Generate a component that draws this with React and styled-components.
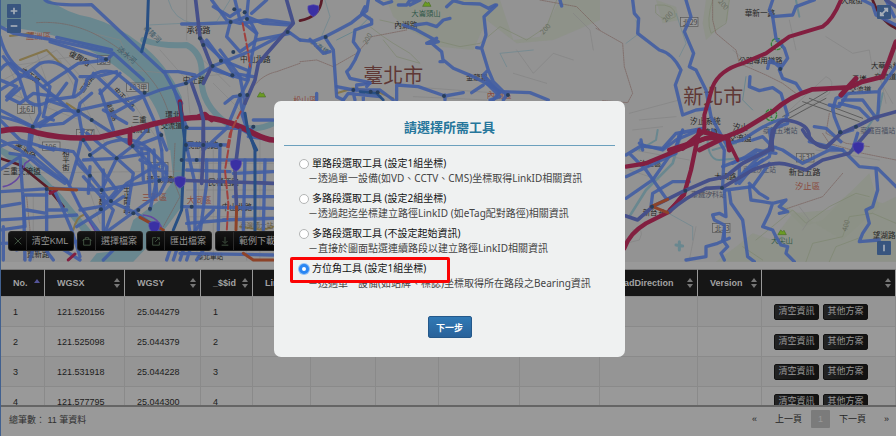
import React, { useState } from "react";
import styled, { createGlobalStyle, css } from "styled-components";

const GlobalStyle = createGlobalStyle`
  *, *::before, *::after { box-sizing: border-box; }
  body {
    margin: 0;
    background: #999;
    font-family: "Liberation Sans", "Noto Sans CJK TC", sans-serif;
    font-size: 9px;
    color: #1c1c1c;
  }
  button, input { font: inherit; }
`;

const Page = styled.div`
  display: flex;
  flex-direction: column;
  height: 100vh;
  border-left: 1px solid #41608f;
  overflow: hidden;
`;

/* ---------- map ---------- */

const MapArea = styled.section`
  position: relative;
  flex: 262 1 0;
  min-height: 0;
  overflow: hidden;
  background: #949494;
`;

const MapCanvas = styled.svg`
  display: block;
  width: 100%;
  height: 100%;
  font-family: "Noto Sans CJK TC", sans-serif;
`;

const ZoomControls = styled.div`
  position: absolute;
  top: 4px;
  left: 6px;
  display: grid;
  gap: 1px;
`;

const MapButton = styled.button`
  display: grid;
  place-items: center;
  width: 14px;
  height: 14px;
  padding: 0;
  border: 0;
  border-radius: 1px;
  background: #38557f;
  color: #a5adb8;
`;

const CornerButton = styled(MapButton)`
  position: absolute;
  right: 5px;
  ${(p) => (p.$bottom ? "bottom: 7px;" : "top: 5px;")}
`;

const Toolbar = styled.div`
  position: absolute;
  left: 7px;
  bottom: 11px;
  display: flex;
  gap: 3px;
`;

const ToolButton = styled.button`
  display: flex;
  align-items: stretch;
  width: 66px;
  height: 20px;
  padding: 0;
  border: 1px solid #222;
  border-radius: 3px;
  background: linear-gradient(#161616, #030303);
  color: #969696;
  font-size: 9px;
  line-height: 18px;
  white-space: nowrap;
`;

const ToolIcon = styled.span`
  display: grid;
  place-items: center;
  width: 18px;
  border-right: 1px solid #2b2b2b;
  color: #4a5f4a;
`;

const ToolText = styled.span`
  flex: 1;
  text-align: center;
`;

/* ---------- table ---------- */

const TableArea = styled.section`
  flex: 136 1 0;
  min-height: 0;
  padding-top: 7px;
  overflow: hidden;
`;

const Table = styled.table`
  width: 100%;
  table-layout: fixed;
  border-collapse: separate;
  border-spacing: 0;
`;

const Col = styled.col`
  width: ${(p) => (p.$w ? `${p.$w}px` : "auto")};
`;

const HeadCell = styled.th`
  height: 28px;
  padding: 0 4px 0 12px;
  background: #161616;
  border-top: 1px solid #777;
  border-right: 1px solid #999;
  border-bottom: 1px solid #8a8a8a;
  color: #a3a3a3;
  text-align: left;
  white-space: nowrap;
`;

const HeadContent = styled.div`
  display: flex;
  align-items: center;
  justify-content: space-between;
`;

const Row = styled.tr`
  background: ${(p) => (p.$odd ? "#959595" : "#999")};
`;

const Cell = styled.td`
  height: 30px;
  padding: 0 0 0 12px;
  border-right: 1px solid #8a8a8a;
  border-bottom: 1px solid #8a8a8a;
  white-space: nowrap;
`;

const RowActions = styled.div`
  display: flex;
  gap: 4px;
`;

const RowButton = styled.button`
  width: 45px;
  height: 16px;
  padding: 0;
  border: 1px solid #111;
  border-radius: 2px;
  background: linear-gradient(100deg, #242424, #121212 70%);
  color: #989898;
  font-size: 9px;
  line-height: 13px;
`;

const Footer = styled.footer`
  flex: 0 0 31px;
  display: flex;
  align-items: center;
  justify-content: space-between;
  padding: 0 7px 5px 8px;
  border-top: 2px solid #656565;
  background: #999;
  color: #303030;
`;

const Pager = styled.nav`
  display: flex;
  align-items: center;
  gap: 9px;
`;

const PageLink = styled.a`
  color: #252525;
  text-decoration: none;
  line-height: 18px;
  ${(p) => p.$edge && css`padding: 0 9px 0 8px;`}
  ${(p) => p.$last && css`padding: 0 0 0 9px;`}
  ${(p) =>
    p.$active &&
    css`
      width: 19px;
      text-align: center;
      background: #7b7b7b;
      color: #999;
      border-radius: 1px;
    `}
`;

/* ---------- dialog ---------- */

const Overlay = styled.div`
  position: fixed;
  inset: 0;
  display: flex;
  justify-content: center;
  align-items: flex-start;
  padding: 101px 0 0 3px;
`;

const Dialog = styled.form`
  width: 351px;
  padding: 16px 10px 19px;
  border-radius: 7px;
  background: #eff1f1;
  font-family: "Noto Sans", "Noto Sans CJK TC", sans-serif;
`;

const DialogTitle = styled.h2`
  margin: 0 0 10px;
  padding-bottom: 9px;
  border-bottom: 1px solid #6ba0bd;
  color: #26769b;
  font-family: "Noto Sans CJK TC", sans-serif;
  font-size: 13px;
  line-height: 19px;
  text-align: center;
`;

const Options = styled.div`
  display: grid;
  gap: 5px;
  padding-left: 15px;
`;

const Option = styled.div`
  font-size: 10px;
  line-height: 15px;
`;

const OptionLabel = styled.label`
  position: relative;
  z-index: 1;
  display: flex;
  align-items: center;
  width: max-content;
  gap: 3px;
  color: #111;
  font-size: 10px;
  ${(p) =>
    p.$highlight &&
    css`
      &::before {
        content: "";
        position: absolute;
        z-index: -1;
        inset: -4px -24px -7px -9px;
        border: 3px solid #fb0303;
        border-radius: 2px;
        background: #eff1f1;
      }
    `}
`;

const Radio = styled.input`
  appearance: none;
  width: 10px;
  height: 10px;
  margin: 0;
  border: 1px solid #b3b5b5;
  border-radius: 50%;
  background: #fff;
  &:checked {
    border: 3px solid #2b87f3;
    box-shadow: 0 0 0 1px #8fc0f5;
  }
`;

const OptionHint = styled.p`
  margin: 0;
  padding-left: 9px;
  color: #444;
  white-space: nowrap;
`;

const DialogActions = styled.div`
  display: flex;
  justify-content: center;
  margin-top: 25px;
`;

const NextButton = styled.button`
  width: 44px;
  height: 22px;
  padding: 0;
  border: 1px solid #24588a;
  border-radius: 2px;
  background: linear-gradient(#3079b5, #29629a);
  color: #fff;
  font-size: 9px;
  font-weight: 700;
`;

/* ---------- map data: each tile is drawn on a 3x grid ---------- */

const tiles = [
  {
    x: 0, y: 0,
    water: [
      "M60 0 L150 0 Q200 40 270 52 Q350 75 420 130 Q500 190 545 290 L560 450 L505 450 Q485 330 430 270 Q350 190 240 135 Q140 90 0 80 L0 20 Z",
      "M0 0 L60 0 L100 40 L0 60 Z",
    ],
    streams: [
      ["M430 120 Q490 140 560 135 Q610 160 605 230 Q600 310 680 370 Q760 400 820 370", 18],
      ["M445 75 L650 65 L690 0", 2], ["M505 0 Q520 60 580 70", 2],
    ],
    minor: [
      "M280 100 L360 120 L400 210 L500 220 M560 0 L560 120 M640 250 L740 350 M480 150 L560 240 L570 340 M20 200 L220 170 M10 240 L170 150 L260 250 M30 280 L240 360 M110 160 L160 300 L90 380 M240 160 L390 320 M590 230 L700 220 M610 180 L690 260 M10 160 L120 420 M180 180 L320 440 M380 280 L480 430",
    ],
    trails: ["M110 68 Q200 62 280 100 Q400 160 470 260 Q520 340 525 450", "M730 320 Q760 230 830 215 L900 190"],
    red: [["M0 393 Q60 380 110 398 Q200 420 300 412 Q380 395 460 372 Q550 350 620 352 Q700 365 760 400 Q800 420 820 420", 17], ["M390 395 L390 430 M540 305 L545 360 M595 350 L615 342 L635 360", 14]],
    yellow: ["M30 108 L100 100 M60 180 L140 150 L190 200 M200 310 L400 440"],
    navy: [["M445 0 L442 90 L425 155", 9], ["M540 310 L558 450 M735 340 L745 400 L770 450", 9]],
    purple: ["M587 0 L600 110 L635 200 L610 250 M860 0 L880 70 L775 190 L765 240 L735 310", "M575 250 L600 320 L610 360 L610 450"],
    rail: ["M728 70 L745 160 L750 200 M722 335 L690 400 L680 450"],
    roads: [
      "M135 0 Q150 18 275 14 L425 155 L495 220 L520 265 L545 310",
      "M0 80 L40 100 L150 118 L340 160 L320 180 L235 190 L130 260",
      "M150 125 L320 178 M170 112 L335 150",
      "M0 110 Q20 190 80 220 L230 345 L240 330 L440 285 L480 270 L558 250 L635 200 L760 150 L865 95",
      "M0 210 Q30 170 50 210 L80 300 Q110 330 150 300 L225 290 Q260 270 260 240 Q300 200 350 220 L430 285",
      "M0 240 L50 260 L20 290 L60 310 L100 280 L170 290 L200 250 M0 270 L80 220 L120 190 Q180 170 230 240 L220 290",
      "M10 170 L50 220 L110 240 L120 340 L100 380 L90 450 M0 330 L100 380 L190 330 L240 335",
      "M100 210 L150 260 L130 350 L160 360 M0 350 Q50 360 95 380 M0 360 L60 420 L160 450",
      "M240 230 L290 230 L350 215 M280 220 L400 330 M235 335 L250 420 L270 450",
      "M235 335 L400 440 L450 450 M275 280 L240 310 L235 335 M300 270 L340 390",
      "M330 345 L430 290 L470 380 L485 450 M310 330 L380 370",
      "M340 160 L430 240 M100 380 L190 370 L240 335",
      "M545 72 L590 72 L690 68 L740 50 L745 0 M635 0 L680 60 L720 70 L800 60 L875 70",
      "M600 115 L680 190 L700 220 L760 230 M635 200 L700 230",
      "M690 70 L680 110 L720 155 L770 120 L870 100 M705 0 L720 60 L770 100",
      "M735 35 L770 100 L755 170 L745 240 L720 290 L730 350 M740 50 L790 70 L870 75",
      "M660 150 L720 230 L735 310 L725 340 L745 400 L760 380 M675 310 L700 290 L745 285",
      "M520 260 L560 385 L720 385 L745 400 M620 120 L665 180 L740 210",
      "M480 400 L500 450 M760 360 L820 360 M560 430 L680 435",
      "M640 210 L740 240 L750 200 M490 215 L535 215 L585 225",
      "M720 30 L690 50 L640 20 M755 40 L800 0 M865 95 L900 120",
      "M140 300 L200 320 M170 340 L120 380 M20 300 L60 265 M720 290 L680 385 L610 450",
      "M400 440 L480 410 M300 280 L360 220",
    ],
    dots: [[235, 333], [98, 380], [318, 178], [558, 250], [600, 115], [638, 198], [663, 182], [700, 156], [692, 66], [734, 37], [741, 57], [720, 285], [742, 285], [760, 380], [560, 382], [484, 405], [250, 420], [398, 438], [610, 135], [697, 226], [662, 435], [610, 435], [703, 28], [863, 96], [558, 435], [275, 360], [434, 278]],
    labels: [
      ["蘆洲區", 78, 116, 25, "#8a4a3e"], ["復興路", 205, 165, 23, "#222", 30], ["淡水河", 350, 150, 22, "#3d5a68", 40], ["承德路", 560, 100, 24], ["中山北路", 720, 187, 23], ["中正路", 548, 248, 23], ["三重", 396, 366, 22], ["交流道", 385, 396, 22], ["環北", 496, 350, 22], ["交流道", 482, 384, 22], ["民族北路", 560, 445, 24], ["中正路", 60, 215, 22, "#222", 35], ["三和路", 250, 280, 20, "#222", -55], ["中正北路", 340, 270, 20, "#222", 48], ["重陽路", 315, 310, 20, "#222", 65], ["基隆河", 430, 85, 21, "#3d5a68", 45],
    ],
    shields: [["103甲", 380, 249], ["北61", 52, 314], ["北67", 230, 388], ["北6", 292, 167], ["106", 128, 426]],
    peaks: [[784, 284]],
  },
  {
    x: 300, y: 0,
    green: ["M260 0 L600 0 L640 120 L720 110 L780 0 L900 0 L900 60 L760 120 L650 130 L560 60 L520 150 L420 140 L330 90 L280 50 Z"],
    streams: [["M210 50 L170 90 L110 120", 3], ["M75 0 L90 50 L60 120", 2], ["M620 200 L600 160 L700 150", 2]],
    minor: ["M330 260 L600 280 M340 290 L560 300 M650 150 L700 220 L760 160 L820 180 M820 40 L870 90 L880 150 M640 220 L740 250"],
    contours: ["M210 80 L250 110 L280 130 L330 160 L360 190 L290 170 L250 120 M240 60 L330 80 L400 120 L480 140 L540 130 L600 80 L680 120 L740 80 L770 0"],
    trails: ["M0 185 L50 180 L100 200 L170 160 L215 110 L320 90", "M720 0 L830 20 L900 90"],
    darkred: ["M0 62 Q60 50 65 0"],
    yellow: ["M110 280 L160 265 L230 275 L280 295"],
    navy: [["M180 275 L230 280 L250 300", 8]],
    roads: [
      "M0 120 L40 124 L75 110 L110 92 L155 68 L200 32 L205 0",
      "M75 112 L100 150 L110 290 L130 300 M30 118 L70 160 L90 155",
      "M195 20 L185 40 L215 60 L215 72 L165 90 L160 125 L178 150 L165 180 L150 205 L140 215 L150 235 L210 248 L200 260",
      "M230 0 L250 12 L275 5 M295 15 L320 15 L330 0 L360 0 L330 15 M440 20 L460 2 L490 10 L540 12 L565 25 L585 15",
      "M590 15 L552 50 L558 105 L545 145 L530 143 M545 145 L565 210 L550 225 L600 275 M565 210 L580 245 L620 285",
      "M345 75 L380 70 L410 80 L430 60 L450 55",
      "M310 75 L350 90 L415 125 L395 130 L380 130 L410 115 M395 130 L425 155 L430 185 L420 185 M430 180 L460 205 L520 230 L550 245 L600 275",
      "M290 300 L290 255 L355 260 L435 288 L490 278 M435 285 L435 300 M515 278 L550 255",
      "M110 260 L160 270 L240 270 L280 300 M130 300 L145 280 L240 290 M50 280 L50 300 M190 270 L190 300 M160 280 L165 300",
      "M580 300 L600 275 L690 278 L745 300 M620 285 L610 300 M780 0 L785 18 M210 250 L170 255 L170 270",
      "M550 230 L590 270 M560 250 L600 290 L570 300",
    ],
    dots: [[77, 111], [160, 270], [212, 275], [233, 277], [432, 288], [624, 285]],
    labels: [["大崙頭山", 334, 47, 22, "#31584a"], ["內湖路", 283, 85, 23], ["臺北市", 190, 250, 60, "#5f3835"], ["金龍路", 498, 240, 22], ["內湖區", 560, 294, 25, "#8a4a3e"], ["松山區", -20, 310, 24, "#8a4a3e"], ["200", 200, 135, 21, "#666b60", -60], ["200", 730, 105, 21, "#666b60", -48], ["大直橋", 30, 130, 20, "#3d5a68", 35]],
    peaks: [[380, 12]], pins: [[40, 30]],
  },
  {
    x: 596, y: 0,
    green: ["M180 0 L240 20 L250 60 L200 70 Z M330 0 L400 0 L395 60 L330 120 L320 70 Z"],
    streams: [["M240 40 L270 130 L250 170", 2], ["M90 130 L130 100 L120 60", 2], ["M130 450 L180 420 L185 390 M600 0 L610 50", 6], ["M450 230 L440 300 L470 330", 3], ["M810 390 L850 330 L860 280 M350 450 L420 430", 6]],
    contours: ["M180 15 Q240 10 238 50 Q210 70 180 40 Z M350 0 Q330 60 345 100 L390 70 L400 0"],
    minor: ["M100 340 L250 300 M410 150 L470 200 M580 60 L600 150 M690 110 L770 160 L820 150 L830 210 M130 360 L240 350 M110 390 L200 380 M840 220 L890 310 M850 210 L870 310 M560 350 L690 230 Q720 240 700 280 L560 370"],
    rail2: ["M560 350 L650 300 L700 270 M560 365 L690 295 M640 295 L800 355 M620 305 L790 365"],
    trails: ["M0 85 L80 130 L85 200 L110 280 L95 308 L20 302", "M350 0 L350 60 L360 100 L420 150 L430 190 L510 225 L560 250 L600 280", "M700 340 L690 400 L750 430 L820 440"],
    red: [["M735 0 Q710 60 680 80 L580 110 L510 160 L440 190 Q370 210 350 260 L325 345 L325 390", 12], ["M900 125 L880 180 L860 230 L800 245 L760 262 L650 268 Q580 290 530 335 L440 390 L390 410 L330 415 L220 450", 14], ["M260 445 L320 395 L390 415 M780 235 L735 285 M310 450 L390 410 M395 410 L400 450", 15]],
    darkred: ["M830 0 Q850 60 900 85"],
    purple: ["M530 450 Q520 370 570 360 Q640 370 640 410 Q660 440 690 443 L735 400 L790 375 L830 355 L900 335", "M870 0 L900 20"],
    roads: [
      "M110 0 L115 40 L128 55 L125 100 L190 150 Q230 160 255 210 L238 255 L260 345 L300 330 L340 325",
      "M270 0 L285 50 L265 95 L293 160 L280 200 L300 210 L330 270 L345 350 L400 450",
      "M530 0 L520 30 L530 50 L540 115 L565 145 L575 175 L550 210 L560 235 L600 250 L620 280",
      "M530 50 L590 45 L600 20 L640 5 L655 0 M515 205 L520 185 L550 195 M525 180 L555 205",
      "M462 230 L460 260 L490 272 L530 263 L555 280 L575 345",
      "M130 430 L150 440 L200 445 L240 400 L320 385 M240 450 L250 400 L300 390 M135 420 L140 450",
      "M570 350 L575 370 L520 390 L530 450 M470 420 L500 410 L520 430 M655 380 L690 385 L735 425",
      "M710 330 L720 295 L760 280 L850 275 M730 310 L790 325 L820 355 M710 320 L715 350 L735 400 M740 300 L800 300 L845 360 L850 270 L900 200",
      "M800 0 L830 15 L840 45 L900 75 M785 400 L770 450 M870 0 L895 50",
      "M750 290 L730 320 L700 315 M570 360 Q540 350 440 420 L400 430",
    ],
    dots: [[553, 207], [780, 380], [733, 397]],
    labels: [["華新一路", 446, 49, 23], ["大成街", 735, 8, 22], ["公路專用道路", 428, 190, 22], ["大華系統", 825, 204, 22], ["交流道", 835, 236, 22], ["五堵", 768, 243, 22], ["交流道", 760, 276, 22], ["新北市", 262, 311, 60, "#5f3835"], ["汐止系統", 282, 372, 23], ["交流道", 300, 402, 22], ["汐止", 410, 390, 23], ["交流道", 398, 424, 23], ["臺鐵五堵站", 500, 400, 21, "#484f5f"], ["臺鐵百福站", 793, 398, 21, "#484f5f"], ["200", 210, 68, 21, "#666b60", -50], ["200", 365, 5, 21, "#666b60", 50]],
    shields: [["北29", 254, 53]], badges: [["2", 543, 132], ["1", 525, 345]],
  },
  {
    x: 0, y: 130,
    water: ["M505 0 L560 0 L550 150 L545 230 L500 290 L400 395 L270 395 L290 370 L370 360 L400 270 L480 210 L520 150 Z", "M0 50 L80 90 L180 190 L280 310 L250 310 L140 170 L0 70 Z"],
    minor: ["M10 130 L820 120 M10 340 L400 320 M600 60 L590 390 M640 60 L640 390 M730 100 L740 390 M560 180 L820 180 M560 260 L820 260 M780 20 L780 390 M100 200 L100 390 M230 60 L300 280 M400 50 L480 200 M560 100 L820 100"],
    trails: ["M525 40 L520 150 L540 200 L490 290", "M80 200 L90 300 L70 390"],
    red: [["M150 190 L170 180 M205 390 L225 372", 9]],
    yellow: ["M330 5 L400 45 M510 140 L550 155 M220 300 Q230 260 250 255", "M720 290 L790 300 L820 290"],
    darkred: ["M0 85 L60 105 L140 170 L190 230"],
    orange: ["M140 175 L230 180 M420 262 L490 300 M710 230 L708 300 M730 370 L760 390 L820 390"],
    violet: ["M10 170 Q60 160 75 100 L90 90 M430 255 Q480 260 490 310", "M200 150 L240 230 L290 310"],
    navy: [["M555 0 L545 240 L520 300 M745 0 L765 60 L765 320", 9]],
    purple: ["M610 0 L610 60 L605 160 M720 0 L705 120 L710 240", "M510 150 L820 160"],
    rail: ["M695 0 L675 120 L685 220 L680 310"],
    roads: [
      "M0 50 Q60 20 100 60 L200 150 L240 230 L300 310 M0 30 L60 60 L120 110 L195 160",
      "M0 185 L160 175 L310 180 L500 145 M0 120 L60 80 L75 290 M75 195 L140 195 M90 0 L85 60",
      "M0 270 L80 265 L230 255 M0 340 L230 335 M10 290 L10 390 M0 300 L70 290",
      "M160 175 L190 240 L215 300 L240 380 M30 70 L100 80 L160 130 L210 160 L230 90 Q240 50 250 0",
      "M120 50 L220 65 L270 137 L305 180 M270 75 L320 40 Q400 10 450 60 L500 110 L500 150 L480 190 L410 240 L300 320",
      "M230 95 Q230 100 270 137 M305 180 L330 213 L410 250 L480 300 M250 90 L350 85 L440 70",
      "M260 10 L350 85 L400 130 L380 250 M270 75 L350 180 L300 240 M305 180 L350 85 L398 48 L440 0",
      "M398 48 L450 100 L470 150 L450 240 M330 213 L380 160 L480 100 M250 140 L340 240 L310 320",
      "M270 110 L265 190 M310 120 L310 300 M420 90 L500 130 M445 60 L450 200 M462 60 L470 190 M485 60 L490 150 M425 60 L430 150",
      "M240 240 L300 230 M230 290 L310 240 L370 200 M110 360 L160 340 L240 390 M50 360 L120 340",
      "M140 180 L140 310 M140 240 L200 240 M70 200 L75 390 M0 230 L60 220 M80 240 L140 250",
      "M560 90 L820 90 M560 45 L660 48 M545 230 L820 235 M560 280 L680 270",
      "M560 50 L585 160 L585 300 M620 90 L620 160 L600 310 M660 50 L655 300 M735 90 L730 300 M795 90 L790 300",
      "M640 240 L610 270 L580 310 M560 240 L570 310 M560 120 L690 125 M700 200 L820 200",
      "M500 390 L510 360 M520 390 L530 360 M540 390 L550 360 M560 390 L570 360 M590 390 L610 360 M540 370 L820 375",
      "M670 270 L820 265 M700 130 L820 125 M745 20 L820 30",
      "M100 350 L90 390 M130 350 L160 390 M350 350 L310 390",
    ],
    dots: [[270, 75], [305, 180], [310, 320], [400, 250], [450, 236], [545, 90], [545, 155], [140, 177], [270, 137], [478, 152], [590, 90], [415, 240], [575, 230], [350, 85], [333, 213], [303, 238]],
    labels: [["三重交流道", 8, 132, 23], ["蘆洲路", 40, 55, 24, "#222", 25], ["和平街", 198, 56, 22, "#222", 0, true], ["中正南路", 381, 160, 22, "#222", 0, true], ["三和路", 306, 180, 20, "#222", 0, true], ["環河北路", 440, 155, 20], ["三重區", 426, 210, 25, "#8a4a3e"], ["大同區", 560, 219, 25, "#8a4a3e"], ["民權西路", 625, 166, 23], ["中山北路", 665, 240, 23], ["重新路", 80, 382, 23], ["臺灣師大站", 720, 295, 20, "#5f5540"], ["臺北車站", 590, 388, 20]],
    shields: [["103", 452, 97]], pins: [[708, 104], [463, 290], [540, 155]],
  },
  {
    x: 596, y: 130,
    green: ["M360 395 L420 350 L470 310 L530 330 L590 250 L700 240 L760 190 L860 220 L900 200 L900 395 Z", "M540 210 L620 290 L680 270 L820 130 L850 230 L740 330 Z"],
    streams: [["M100 260 L150 180 L230 100 L260 0", 8], ["M335 0 Q330 90 370 90 L480 80 L540 50", 6], ["M240 345 L260 348 M250 335 L250 360", 9], ["M200 240 L290 290 L290 330", 2]],
    contours: ["M440 350 L500 390 M480 330 L590 240 L630 280 L700 230 L780 190 L820 200 M630 395 L650 340 L740 320 L760 260 L830 250 L900 280 M700 395 L720 350 L800 320"],
    minor: ["M110 300 Q150 290 130 330 L90 340 M300 290 L280 390 M110 60 L280 90 M610 230 L640 270 L620 300 M100 120 L190 150 M660 60 L850 90"],
    trails: ["M680 10 L700 40 L800 70 L900 90 M290 190 L360 190 M560 240 L680 200 L740 130"],
    red: [["M90 110 L150 100 L210 75 L330 25", 13], ["M310 0 L285 120 L265 190 L220 245 L150 280 Q100 310 85 355", 13], ["M395 20 L400 40 L425 90 M265 195 L220 240", 11]],
    orange: ["M165 230 L215 208 M170 230 L215 248"],
    purple: ["M90 258 L125 270 L170 230 L260 185 L340 150 L390 140 L440 100 L520 60 L530 0", "M220 245 Q270 200 330 175 L380 172 L470 120 Q540 90 580 105 L630 120 L680 90 L760 70 L820 0", "M620 0 Q640 40 690 52 L735 10"],
    roads: [
      "M90 75 L140 45 L200 60 L240 30 L310 0 M100 70 L150 120 L210 205 M90 140 L240 70",
      "M90 205 L170 150 L240 50 L260 0 M165 230 L170 190 L230 155 L280 155",
      "M350 0 L385 60 L380 170 M400 130 L430 105 L530 50 L560 60 L620 100 L700 60 L740 60",
      "M380 110 L430 90 L500 70 M420 160 L440 130 L520 80 L535 0 M440 130 L490 80 L510 70 M430 110 L430 160 L480 100",
      "M385 180 L390 260 L370 250 L350 255 L355 270 L385 285 L385 330 L400 325 L365 340 L330 350 L330 380 L270 390",
      "M385 300 L380 330 L395 350 L375 370 L385 390 M400 185 L405 220 L440 270 L455 380 L475 395",
      "M460 170 L465 210 L500 215 L530 220 L570 210 L550 230 L575 245 L550 250 M530 220 L520 250 L500 290 L530 300 L540 320 L555 345 L575 350 L570 370 L595 395",
      "M460 160 L490 190 L515 205 M740 60 L790 110 L845 115 L870 140 L900 170",
      "M840 115 L845 180 L830 230 L810 240 L820 280 L800 310 L790 335 L850 330",
      "M735 10 L770 0 M390 180 L470 170 L520 100 M640 35 L700 50 L740 60",
      "M450 80 L480 60 L540 70 M410 100 L480 65 M430 140 L500 90",
    ],
    dots: [[268, 182], [168, 230], [378, 174], [733, 7]],
    labels: [["汐止區", 130, 107, 22], ["大同路", 355, 147, 22], ["臺鐵汐科站", 285, 200, 21, "#484f5f"], ["新台五路", 578, 135, 24], ["汐止區", 597, 178, 25, "#8a4a3e"], ["臺鐵汐止站", 440, 125, 20, "#484f5f"], ["新台五", 140, 255, 22], ["大尖山", 525, 340, 22, "#31584a"], ["望湖路", 830, 323, 23], ["400", 752, 305, 21, "#666b60", -75]],
    shields: [["北31", 602, 70], ["北33", 350, 281]], peaks: [[558, 307]], pins: [[787, 52]],
  },
];

function Strokes({ items = [], color, width, dash, opacity = 1 }) {
  return items.map((item, i) => {
    const [d, w] = Array.isArray(item) ? item : [item, width];
    return <path key={i} d={d} fill="none" stroke={color} strokeWidth={w} strokeDasharray={dash} strokeLinejoin="round" strokeLinecap="round" opacity={opacity} />;
  });
}

function Terrain({ t }) {
  return (
    <>
      {(t.green || []).map((d) => <path key={d} d={d} fill="#8b9285" opacity=".7" />)}
      {(t.water || []).map((d) => <path key={d} d={d} fill="#69878f" />)}
      <Strokes items={t.streams} color="#69878f" />
      <Strokes items={t.contours} color="#7d8770" width={2} />
      <Strokes items={t.minor} color="#838383" width={2} />
      <Strokes items={t.rail2} color="#5c5c5c" width={3} />
      <Strokes items={t.trails} color="#795f5b" width={2} dash="4 3" />
      <Strokes items={t.yellow} color="#84754b" width={6} />
      <Strokes items={t.darkred} color="#5a1c28" width={8} />
      <Strokes items={t.violet} color="#6447a0" width={5} />
    </>
  );
}

function Labels({ t }) {
  return (
    <>
      {(t.labels || []).map(([text, x, y, size, color = "#252525", angle = 0, vertical], i) => (
        <text
          key={i}
          x={x}
          y={y}
          fontSize={size}
          fill={color}
          writingMode={vertical ? "vertical-rl" : undefined}
          transform={angle ? `rotate(${angle} ${x} ${y})` : undefined}
        >
          {text}
        </text>
      ))}
      {(t.shields || []).map(([text, x, y]) => (
        <g key={text + x}>
          <rect x={x} y={y} width={text.length * 14 + 10} height="26" fill="#999" stroke="#555" strokeWidth="2" />
          <text x={x + 6} y={y + 21} fontSize="21" fill="#444">{text}</text>
        </g>
      ))}
      {(t.badges || []).map(([text, x, y]) => (
        <g key={text}>
          <circle cx={x} cy={y} r="17" fill="#939b93" stroke="#348337" strokeWidth="4" strokeDasharray="12 3" />
          <text x={x - 6} y={y + 8} fontSize="22" fill="#286c2c">{text}</text>
        </g>
      ))}
    </>
  );
}

function Roads({ t }) {
  return <Strokes items={t.roads} color="#435ea3" width={10} opacity={0.9} />;
}

function Highways({ t }) {
  return (
    <>
      <Strokes items={t.red} color="#821f40" />
      <Strokes items={t.purple} color="#46508a" width={11} />
      <Strokes items={t.navy} color="#284f84" />
      <Strokes items={t.orange} color="#8d4329" width={9} />
      <Strokes items={t.rail} color="#a0413e" width={6} dash="22 9" />
    </>
  );
}

function Marks({ t }) {
  return (
    <>
      {(t.dots || []).map(([x, y]) => <circle key={`${x}-${y}`} cx={x} cy={y} r="6" fill="#283e5a" />)}
      {(t.peaks || []).map(([x, y]) => (
        <path key={x} d={`M${x - 12} ${y + 7} l8 -14 l6 5 l4 -4 l7 13 z`} fill="#6b9c22" stroke="#4c6e28" strokeWidth="2" />
      ))}
      {(t.pins || []).map(([x, y]) => (
        <path key={x} d={`M${x - 16} ${y - 12} q16 -8 32 0 q4 22 -16 32 q-20 -10 -16 -32 z`} fill="#3a30a4" stroke="#5a52ac" strokeWidth="2" />
      ))}
    </>
  );
}

const mapLayers = [Terrain, Labels, Roads, Highways, Marks];

function CityMap() {
  return (
    <MapCanvas viewBox="1 0 895 262" preserveAspectRatio="xMinYMin slice" role="img" aria-label="臺北市 新北市">
      <rect width="896" height="262" fill="#939393" />
      {mapLayers.map((Layer, i) => (
        <g key={i}>
          {tiles.map((t) => (
            <g key={`${t.x}-${t.y}`} transform={`translate(${t.x} ${t.y}) scale(0.3333)`}>
              <Layer t={t} />
            </g>
          ))}
        </g>
      ))}
    </MapCanvas>
  );
}

const iconPaths = {
  clear: "M2 2 L10 10 M10 2 L2 10",
  choose: "M2 4 H10 V11 H2 Z M4 4 V2 H8 V4 M1 6 L2 4 M11 6 L10 4",
  export: "M6 2 H2 V11 H10 V7 M5 7 L10 2 M7 2 H10 V5",
  download: "M6 1 V8 M3 6 L6 9 L9 6 M2 11 H10",
  plus: "M6 2 V10 M2 6 H10",
  minus: "M2 6 H10",
  expand: "M2 10 L10 2 M6 2 H10 V6 M2 6 V10 H6",
  info: "M6 2 V10",
};

function Icon({ name, size = 10, weight = 1 }) {
  return (
    <svg width={size} height={size} viewBox="0 0 12 12" fill="none" stroke="currentColor" strokeWidth={weight} aria-hidden="true">
      <path d={iconPaths[name]} />
    </svg>
  );
}

function SortIcon({ ascending }) {
  return (
    <svg width="6" height="10" viewBox="0 0 6 10" aria-hidden="true">
      {ascending ? <path d="M0 5 L3 1 L6 5 Z" fill="#54549a" /> : <path d="M0 4 L3 0 L6 4 Z M0 6 L3 10 L6 6 Z" fill="#777" />}
    </svg>
  );
}

const tools = [["clear", "清空KML"], ["choose", "選擇檔案"], ["export", "匯出檔案"], ["download", "範例下載"]];

const columns = [
  ["No.", 44], ["WGSX", 80], ["WGSY", 76], ["_$$id", 52], ["LinkID", 58], ["", 65], ["", 63], ["", 81], ["", 80], ["RoadDirection", 98], ["Version", 64], ["", 0],
];

const rows = [
  ["1", "121.520156", "25.044279", "1"],
  ["2", "121.525098", "25.044379", "2"],
  ["3", "121.531918", "25.044228", "3"],
  ["4", "121.577795", "25.044300", "4"],
];

const options = [
  ["單路段選取工具 (設定1組坐標)", "－透過單一設備(如VD、CCTV、CMS)坐標取得LinkID相關資訊"],
  ["多路段選取工具 (設定2組坐標)", "－透過起迄坐標建立路徑LinkID (如eTag配對路徑)相關資訊"],
  ["多路段選取工具 (不設定起始資訊)", "－直接於圖面點選連續路段以建立路徑LinkID相關資訊"],
  ["方位角工具 (設定1組坐標)", "－透過單一設備(如站牌、標誌)坐標取得所在路段之Bearing資訊"],
];

export default function App() {
  const [selected, setSelected] = useState(3);
  return (
    <>
      <GlobalStyle />
      <Page>
        <MapArea>
          <CityMap />
          <ZoomControls>
            <MapButton aria-label="放大"><Icon name="plus" weight={2} /></MapButton>
            <MapButton aria-label="縮小"><Icon name="minus" weight={2} /></MapButton>
          </ZoomControls>
          <CornerButton aria-label="全螢幕"><Icon name="expand" weight={2} /></CornerButton>
          <CornerButton $bottom aria-label="資訊"><Icon name="info" weight={2} /></CornerButton>
          <Toolbar>
            {tools.map(([icon, text]) => (
              <ToolButton key={icon}>
                <ToolIcon><Icon name={icon} /></ToolIcon>
                <ToolText>{text}</ToolText>
              </ToolButton>
            ))}
          </Toolbar>
        </MapArea>
        <TableArea>
          <Table>
            <colgroup>{columns.map(([, w], i) => <Col key={i} $w={w} />)}</colgroup>
            <thead>
              <tr>
                {columns.map(([name], i) => (
                  <HeadCell key={i} scope="col">
                    <HeadContent><span>{name}</span><SortIcon ascending={i === 0} /></HeadContent>
                  </HeadCell>
                ))}
              </tr>
            </thead>
            <tbody>
              {rows.map((row, r) => (
                <Row key={row[0]} $odd={r % 2 === 0}>
                  {columns.slice(0, -1).map((_, i) => <Cell key={i}>{row[i]}</Cell>)}
                  <Cell>
                    <RowActions>
                      <RowButton>清空資訊</RowButton>
                      <RowButton>其他方案</RowButton>
                    </RowActions>
                  </Cell>
                </Row>
              ))}
            </tbody>
          </Table>
        </TableArea>
        <Footer>
          <span>總筆數： 11 筆資料</span>
          <Pager>
            <PageLink href="#first" $edge>«</PageLink>
            <PageLink href="#prev">上一頁</PageLink>
            <PageLink href="#1" $active>1</PageLink>
            <PageLink href="#next">下一頁</PageLink>
            <PageLink href="#last" $last>»</PageLink>
          </Pager>
        </Footer>
      </Page>
      <Overlay>
        <Dialog role="dialog" aria-labelledby="tool-title" onSubmit={(e) => e.preventDefault()}>
          <DialogTitle id="tool-title">請選擇所需工具</DialogTitle>
          <Options>
            {options.map(([label, hint], i) => (
              <Option key={label}>
                <OptionLabel $highlight={i === 3}>
                  <Radio type="radio" name="tool" checked={selected === i} onChange={() => setSelected(i)} />
                  {label}
                </OptionLabel>
                <OptionHint>{hint}</OptionHint>
              </Option>
            ))}
          </Options>
          <DialogActions><NextButton type="submit">下一步</NextButton></DialogActions>
        </Dialog>
      </Overlay>
    </>
  );
}
